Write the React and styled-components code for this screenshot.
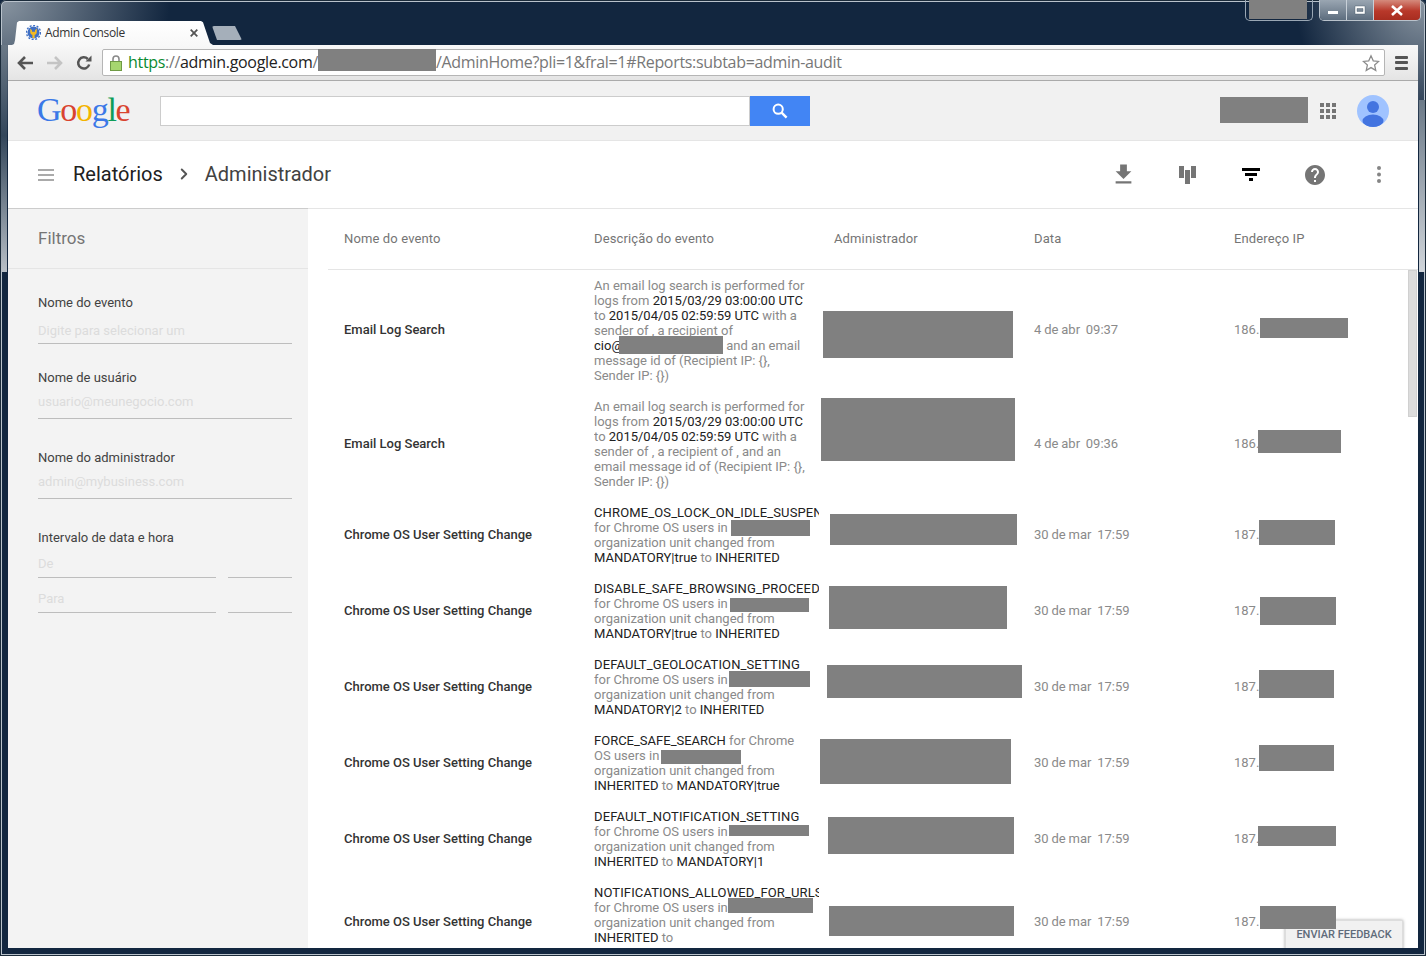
import React from 'react';
import styled, { createGlobalStyle } from 'styled-components';
import { FiChevronRight } from 'react-icons/fi';

const Global = createGlobalStyle`
  html, body { margin: 0; padding: 0; background: #12263f; overflow: hidden; }
  * { box-sizing: border-box; }
`;

const Window = styled.div`
  position: relative;
  width: 1426px;
  height: 956px;
  padding: 0 8px 8px;
  overflow: hidden;
  display: flex;
  flex-direction: column;
  border-radius: 6px 6px 0 0;
  background:
    radial-gradient(ellipse 170px 140px at 0 0, #8a96a2 0%, rgba(138, 150, 162, 0) 100%),
    radial-gradient(ellipse 130px 140px at 100% 0, #8a96a2 0%, rgba(138, 150, 162, 0) 100%),
    #12263f;
  box-shadow: inset 0 0 0 1px #1b2b3a, inset 0 0 0 2px #b9c2cb;
  &::before, &::after {
    content: '';
    position: absolute;
    width: 6px;
  }
  &::before {
    left: 1px;
    top: 45px;
    height: 227px;
    background: linear-gradient(#6a7886, #33465a 40%, #b8bfc6);
  }
  &::after {
    right: 1px;
    top: 100px;
    height: 172px;
    background: linear-gradient(#6c7a88, #d0d5da);
  }
`;

const TitleBar = styled.div`
  height: 45px;
  display: flex;
  align-items: flex-end;
  padding-left: 4px;
  flex: none;
`;

const Tab = styled.div`
  width: 201px;
  height: 24px;
  display: flex;
  align-items: center;
  gap: 4px;
  padding: 0 15px 1px 14px;
  background: linear-gradient(#fff, #f8f8f8);
  clip-path: polygon(0 100%, 2px 96%, 3px 80%, 5px 6%, 7px 0, 189px 0, 191px 5%, 198px 92%, 201px 100%);
  svg { flex: none; }
`;

const TabTitle = styled.span`
  flex: 1;
  font: 12px 'Open Sans', sans-serif;
  color: #333;
  letter-spacing: -0.35px;
`;

const NewTab = styled.div`
  width: 30px;
  height: 14px;
  margin: 0 0 5px -1px;
  background: #a5afba;
  border-radius: 2px;
  clip-path: polygon(0 0, 23px 0, 30px 100%, 5px 100%);
`;

const Controls = styled.div`
  margin-left: auto;
  margin-right: -3px;
  align-self: flex-start;
  display: flex;
  gap: 6px;
`;

const GhostGroup = styled.div`
  width: 68px;
  height: 21px;
  border: 1px solid #9aa7b4;
  border-top: 0;
  border-radius: 0 0 5px 5px;
`;

const ControlGroup = styled.div`
  height: 21px;
  display: flex;
  border: 1px solid #b9c2cb;
  border-top: 0;
  border-radius: 0 0 5px 5px;
  overflow: hidden;
`;

const ControlButton = styled.div`
  width: 27px;
  display: flex;
  align-items: center;
  justify-content: center;
  background: linear-gradient(#9aa6b2, #5d6d7e);
  border-right: 1px solid #c8d0d8;
`;

const CloseButton = styled(ControlButton)`
  width: 46px;
  border-right: 0;
  background: linear-gradient(#d58a7c, #b8382a 55%, #a82d20);
`;

const Content = styled.div`
  position: relative;
  flex: 1;
  min-height: 0;
  display: flex;
  flex-direction: column;
  overflow: hidden;
  background: #fff;
`;

const Toolbar = styled.div`
  height: 36px;
  flex: none;
  display: flex;
  align-items: center;
  padding: 0 10px 0 3px;
  border-bottom: 1px solid #aaa;
  background: linear-gradient(#f8f8f8, #e4e4e4);
`;

const NavIcon = styled.div`
  width: 29px;
  display: flex;
  justify-content: center;
  svg { display: block; }
`;

const Omnibox = styled.div`
  width: 1283px;
  height: 27px;
  margin-left: 4px;
  padding: 0 4px 0 7px;
  display: flex;
  align-items: center;
  background: #fff;
  border: 1px solid #b5b5b5;
  border-radius: 2px;
  svg { flex: none; }
`;

const Url = styled.div`
  flex: 1;
  margin-left: 6px;
  font: 16px 'Open Sans', sans-serif;
  color: #222;
  white-space: nowrap;
  letter-spacing: -0.32px;
  line-height: 25px;
`;

const UrlScheme = styled.span`
  color: #0a8a30;
`;

const UrlMuted = styled.span`
  color: #777;
`;

const Gap = styled.span`
  display: inline-block;
  width: ${(p) => p.$w}px;
`;

const MenuButton = styled.div`
  margin-left: 10px;
  width: 13px;
  display: flex;
  flex-direction: column;
  gap: 2.5px;
  span { height: 3px; background: #555; border-radius: 1px; }
`;

const GoogleBar = styled.div`
  height: 60px;
  flex: none;
  display: flex;
  align-items: center;
  padding: 0 29px 0 30px;
  background: #f1f1f1;
  border-bottom: 1px solid #e5e5e5;
`;

const Logo = styled.div`
  width: 122px;
  font: 34px 'Liberation Serif', serif;
  letter-spacing: -1.3px;
  margin-top: -2px;
  text-indent: -1px;
`;

const LogoLetter = styled.span`
  color: ${(p) => p.$color};
`;

const SearchInput = styled.div`
  width: 590px;
  height: 30px;
  background: #fff;
  border: 1px solid #ccc;
`;

const SearchButton = styled.div`
  width: 60px;
  height: 30px;
  display: flex;
  align-items: center;
  justify-content: center;
  background: #4285f4;
`;

const UserArea = styled.div`
  margin-left: auto;
  display: flex;
  align-items: center;
  gap: 21px;
`;

const AppsGrid = styled.div`
  display: grid;
  grid-template-columns: repeat(3, 4px);
  gap: 2px;
  i { height: 4px; background: #757575; }
`;

const ReportBar = styled.div`
  height: 68px;
  flex: none;
  display: flex;
  align-items: center;
  padding: 0 7px 0 30px;
  border-bottom: 1px solid #e5e5e5;
  background: #fff;
`;

const Hamburger = styled.div`
  width: 16px;
  margin-right: 19px;
  display: flex;
  flex-direction: column;
  gap: 3px;
  span { height: 2px; background: #aaa; }
`;

const Crumb = styled.div`
  font: 20px Roboto, sans-serif;
  color: #212121;
  padding-bottom: 2px;
`;

const CrumbCurrent = styled(Crumb)`
  color: #424242;
`;

const CrumbArrow = styled.div`
  width: 42px;
  display: flex;
  justify-content: center;
  color: #555;
  padding-bottom: 1px;
`;

const ReportActions = styled.div`
  margin-left: auto;
  display: flex;
`;

const ActionIcon = styled.div`
  width: 64px;
  height: 28px;
  display: flex;
  align-items: center;
  justify-content: center;
`;

const Main = styled.div`
  flex: 1;
  min-height: 0;
  display: flex;
`;

const Sidebar = styled.aside`
  width: 300px;
  flex: none;
  background: #f3f3f3;
  border-top: 1px solid #ccc;
  margin-top: -1px;
`;

const SidebarTitle = styled.div`
  height: 60px;
  padding-left: 30px;
  font: 17px/59px Roboto, sans-serif;
  color: #757575;
  border-bottom: 1px solid #e5e5e5;
`;

const Field = styled.div`
  margin-top: ${(p) => p.$top}px;
  padding: 0 16px 0 30px;
`;

const FieldLabel = styled.div`
  font: 13px/15px Roboto, sans-serif;
  color: #424242;
`;

const FieldInput = styled.div`
  height: 26px;
  padding-top: 4px;
  font: 13px/15px Roboto, sans-serif;
  color: #dcdcdc;
  border-bottom: 1px solid #bdbdbd;
  ${FieldLabel} + & {
    height: 34px;
    padding-top: ${(p) => p.$pad || 9}px;
  }
`;

const DateRow = styled.div`
  display: grid;
  grid-template-columns: 178px 64px;
  column-gap: 12px;
  margin-top: 9px;
  &:nth-child(2) { margin-top: 0; }
  &:nth-child(2) ${FieldInput} { height: 33px; padding-top: 11px; }
`;

const TableArea = styled.div`
  flex: 1;
  min-width: 0;
  padding-left: 20px;
`;

const columns = '250px 240px 200px 200px 1fr';

const TableHead = styled.div`
  height: 61px;
  display: grid;
  grid-template-columns: ${columns};
  align-items: center;
  padding-left: 16px;
  padding-bottom: 2px;
  border-bottom: 1px solid #e5e5e5;
`;

const HeadCell = styled.div`
  font: 13px Roboto, sans-serif;
  color: #757575;
  letter-spacing: 0.13px;
`;

const TableBody = styled.div`
  position: relative;
`;

const ScrollThumb = styled.div`
  position: absolute;
  top: 0;
  right: 1px;
  width: 9px;
  height: 147px;
  background: #dcdcdc;
  border: 1px solid #d0d0d0;
`;

const Row = styled.div`
  display: grid;
  grid-template-columns: ${columns};
  align-items: center;
  padding: 8px 0 8px 16px;
`;

const EventName = styled.div`
  font: 500 13px Roboto, sans-serif;
  color: #333;
  padding-bottom: 2px;
`;

const Description = styled.div`
  width: 225px;
  overflow: hidden;
  white-space: nowrap;
  font: 13px/15px Roboto, sans-serif;
  color: #8a8a8a;
`;

const Em = styled.span`
  color: #212121;
  letter-spacing: ${(p) => (p.$setting ? '0.13px' : '0')};
`;

const DateCell = styled.div`
  font: 13px Roboto, sans-serif;
  color: #8a8a8a;
  white-space: pre;
  word-spacing: -0.35px;
  padding-bottom: 2px;
`;

const FeedbackButton = styled.div`
  position: absolute;
  right: 15px;
  bottom: -2px;
  width: 118px;
  height: 30px;
  text-align: center;
  font: 500 11px/28px Roboto, sans-serif;
  color: #5f6b7a;
  background: #f1f1f1;
  border: 1px solid #ddd;
  box-shadow: 0 0 3px rgba(0, 0, 0, 0.35);
`;

const Redaction = styled.div`
  position: absolute;
  left: ${(p) => p.$x}px;
  top: ${(p) => p.$y}px;
  width: ${(p) => p.$w}px;
  height: ${(p) => p.$h}px;
  background: #808080;
`;

const settingRow = (setting, from, to) => ({
  name: 'Chrome OS User Setting Change',
  date: '30 de mar  17:59',
  ip: '187.',
  lines: [
    [<Em key="a" $setting>{setting}</Em>],
    ['for Chrome OS users in'],
    ['organization unit changed from'],
    [<Em key="a">{from}</Em>, ' to ', <Em key="b">{to}</Em>],
  ],
});

const events = [
  {
    name: 'Email Log Search', date: '4 de abr  09:37', ip: '186.',
    lines: [
      ['An email log search is performed for'],
      ['logs from ', <Em key="a">2015/03/29 03:00:00 UTC</Em>],
      ['to ', <Em key="a">2015/04/05 02:59:59 UTC</Em>, ' with a'],
      ['sender of , a recipient of'],
      [<Em key="a">cio@</Em>, <Gap key="g" $w={100} />, ' and an email'],
      ['message id of (Recipient IP: {},'],
      ['Sender IP: {})'],
    ],
  },
  {
    name: 'Email Log Search', date: '4 de abr  09:36', ip: '186.',
    lines: [
      ['An email log search is performed for'],
      ['logs from ', <Em key="a">2015/03/29 03:00:00 UTC</Em>],
      ['to ', <Em key="a">2015/04/05 02:59:59 UTC</Em>, ' with a'],
      ['sender of , a recipient of , and an'],
      ['email message id of (Recipient IP: {},'],
      ['Sender IP: {})'],
    ],
  },
  settingRow('CHROME_OS_LOCK_ON_IDLE_SUSPEND', 'MANDATORY|true', 'INHERITED'),
  settingRow('DISABLE_SAFE_BROWSING_PROCEED_ANYWAY', 'MANDATORY|true', 'INHERITED'),
  settingRow('DEFAULT_GEOLOCATION_SETTING', 'MANDATORY|2', 'INHERITED'),
  {
    name: 'Chrome OS User Setting Change', date: '30 de mar  17:59', ip: '187.',
    lines: [
      [<Em key="a">FORCE_SAFE_SEARCH</Em>, ' for Chrome'],
      ['OS users in'],
      ['organization unit changed from'],
      [<Em key="a">INHERITED</Em>, ' to ', <Em key="b">MANDATORY|true</Em>],
    ],
  },
  settingRow('DEFAULT_NOTIFICATION_SETTING', 'INHERITED', 'MANDATORY|1'),
  {
    name: 'Chrome OS User Setting Change', date: '30 de mar  17:59', ip: '187.',
    lines: [
      [<Em key="a" $setting>NOTIFICATIONS_ALLOWED_FOR_URLS</Em>],
      ['for Chrome OS users in'],
      ['organization unit changed from'],
      [<Em key="a">INHERITED</Em>, ' to'],
      [<Em key="a">MANDATORY|1</Em>],
    ],
  },
];

// grey boxes painted over private data in the screenshot, page coordinates
const redactions = [
  [1249, 0, 58, 19], [318, 49, 118, 22], [1220, 97, 88, 26],
  [619, 336, 104, 18], [823, 311, 190, 47], [1260, 318, 88, 20],
  [821, 398, 194, 63], [1258, 430, 83, 23],
  [731, 520, 79, 16], [830, 514, 187, 31], [1259, 520, 76, 25],
  [730, 598, 79, 14], [829, 586, 178, 43], [1260, 597, 76, 28],
  [729, 671, 81, 16], [827, 665, 195, 33], [1259, 670, 75, 28],
  [661, 750, 80, 14], [820, 739, 191, 45], [1259, 745, 75, 26],
  [729, 825, 80, 11], [828, 817, 186, 37], [1258, 826, 78, 20],
  [728, 898, 85, 15], [829, 906, 185, 30], [1260, 906, 76, 23],
];

const logoLetters = [
  ['G', '#3b78e7'], ['o', '#d9432f'], ['o', '#f4b400'],
  ['g', '#3b78e7'], ['l', '#0f9d58'], ['e', '#d9432f'],
];

const App = () => (
  <Window>
    <Global />
    <TitleBar>
      <Tab>
        <svg width="15" height="15" viewBox="0 0 15 15">
          <circle cx="7.5" cy="7.5" r="6" fill="#3f6fc4" />
          <circle cx="7.5" cy="7.5" r="7" fill="none" stroke="#3f6fc4" strokeWidth="1.4" strokeDasharray="2 1.6" />
          <path d="M4.2 3.5v3.2a3.3 3.3 0 0 0 6.6 0V3.5L9 5.2v1.5H6V5.2z" fill="#f5b921" />
          <rect x="6.4" y="9" width="2.2" height="4" fill="#f5b921" />
        </svg>
        <TabTitle>Admin Console</TabTitle>
        <svg width="8" height="8" viewBox="0 0 8 8">
          <path d="M.7.7l6.6 6.6M7.3.7L.7 7.3" stroke="#555" strokeWidth="1.8" />
        </svg>
      </Tab>
      <NewTab />
      <Controls>
        <GhostGroup />
        <ControlGroup>
          <ControlButton>
            <svg width="12" height="10" viewBox="0 0 12 10"><rect x="1" y="6" width="10" height="3" fill="#fff" /></svg>
          </ControlButton>
          <ControlButton>
            <svg width="12" height="10" viewBox="0 0 12 10"><path d="M1 1h10v8H1zM3 3.5v3h6v-3z" fill="#fff" fillRule="evenodd" stroke="#40505f" strokeWidth=".4" /></svg>
          </ControlButton>
          <CloseButton>
            <svg width="14" height="11" viewBox="0 0 14 11"><path d="M2 1l10 9M12 1L2 10" stroke="#fff" strokeWidth="2.6" /></svg>
          </CloseButton>
        </ControlGroup>
      </Controls>
    </TitleBar>

    <Content>
      <Toolbar>
        <NavIcon>
          <svg width="17" height="16" viewBox="0 0 17 16"><path d="M8 2L2 8l6 6M2 8h14" fill="none" stroke="#555" strokeWidth="2.6" /></svg>
        </NavIcon>
        <NavIcon>
          <svg width="17" height="16" viewBox="0 0 17 16"><path d="M9 2l6 6-6 6M15 8H1" fill="none" stroke="#c4c4c4" strokeWidth="2.6" /></svg>
        </NavIcon>
        <NavIcon>
          <svg width="16" height="16" viewBox="0 0 16 16"><path d="M13.2 9.5A5.6 5.6 0 1 1 11.8 4" fill="none" stroke="#555" strokeWidth="2.5" /><path d="M9.5 6.5h6v-6z" fill="#555" /></svg>
        </NavIcon>
        <Omnibox>
          <svg width="12" height="17" viewBox="0 0 12 17">
            <path d="M3 8V5a3 3 0 0 1 6 0v3" fill="none" stroke="#8a8a8a" strokeWidth="1.6" />
            <rect x=".5" y="7.5" width="11" height="9" fill="#a6d66f" stroke="#6f9a45" />
          </svg>
          <Url>
            <UrlScheme>https</UrlScheme>
            <UrlMuted>://</UrlMuted>admin.google.com<UrlMuted>/</UrlMuted>
            <Gap $w={118} />
            <UrlMuted>/AdminHome?pli=1&amp;fral=1#Reports:subtab=admin-audit</UrlMuted>
          </Url>
          <svg width="18" height="18" viewBox="0 0 20 19">
            <path d="M10 1.5l2.5 5.6 6 .6-4.5 4 1.3 6L10 14.6l-5.3 3.1 1.3-6-4.5-4 6-.6z" fill="#fff" stroke="#8c8c8c" strokeWidth="1.4" />
          </svg>
        </Omnibox>
        <MenuButton>
          <span /><span /><span />
        </MenuButton>
      </Toolbar>

      <GoogleBar>
        <Logo>
          {logoLetters.map(([letter, color], i) => (
            <LogoLetter key={i} $color={color}>{letter}</LogoLetter>
          ))}
        </Logo>
        <SearchInput />
        <SearchButton>
          <svg width="18" height="18" viewBox="0 0 18 18">
            <circle cx="7.2" cy="7.2" r="4.6" fill="none" stroke="#fff" strokeWidth="2" />
            <path d="M10.6 10.6l5 5" stroke="#fff" strokeWidth="2.4" />
          </svg>
        </SearchButton>
        <UserArea>
          <AppsGrid>
            {Array.from({ length: 9 }).map((_, i) => <i key={i} />)}
          </AppsGrid>
          <svg width="32" height="32" viewBox="0 0 32 32">
            <defs><clipPath id="avatar"><circle cx="16" cy="16" r="16" /></clipPath></defs>
            <circle cx="16" cy="16" r="16" fill="#a0c3ff" />
            <g clipPath="url(#avatar)">
              <circle cx="16" cy="12" r="6" fill="#4374e0" />
              <ellipse cx="16" cy="26" rx="10.5" ry="6.5" fill="#4374e0" />
            </g>
          </svg>
        </UserArea>
      </GoogleBar>

      <ReportBar>
        <Hamburger><span /><span /><span /></Hamburger>
        <Crumb>Relatórios</Crumb>
        <CrumbArrow><FiChevronRight size={18} strokeWidth={2.6} /></CrumbArrow>
        <CrumbCurrent>Administrador</CrumbCurrent>
        <ReportActions>
          <ActionIcon>
            <svg width="27" height="27" viewBox="0 0 24 24"><path d="M19 9h-4V3H9v6H5l7 7 7-7zM5 18v2h14v-2H5z" fill="#757575" /></svg>
          </ActionIcon>
          <ActionIcon>
            <svg width="17" height="18" viewBox="0 0 17 18" fill="#757575">
              <rect width="5" height="12" /><rect x="6" y="4" width="5" height="14" /><rect x="12" width="5" height="12" />
            </svg>
          </ActionIcon>
          <ActionIcon>
            <svg width="18" height="13" viewBox="0 0 18 13">
              <rect width="18" height="3" /><rect x="3" y="5" width="12" height="3" /><rect x="7" y="10" width="4" height="3" />
            </svg>
          </ActionIcon>
          <ActionIcon>
            <svg width="24" height="24" viewBox="0 0 24 24"><path d="M12 2C6.48 2 2 6.48 2 12s4.48 10 10 10 10-4.48 10-10S17.52 2 12 2zm1 17h-2v-2h2v2zm2.07-7.75l-.9.92C13.45 12.9 13 13.5 13 15h-2v-.5c0-1.1.45-2.1 1.17-2.83l1.24-1.26c.37-.36.59-.86.59-1.41 0-1.1-.9-2-2-2s-2 .9-2 2H8c0-2.21 1.79-4 4-4s4 1.79 4 4c0 .88-.36 1.68-.93 2.25z" fill="#757575" /></svg>
          </ActionIcon>
          <ActionIcon>
            <svg width="4" height="17" viewBox="0 0 4 17" fill="#858585">
              <circle cx="2" cy="2" r="2" /><circle cx="2" cy="8.5" r="2" /><circle cx="2" cy="15" r="2" />
            </svg>
          </ActionIcon>
        </ReportActions>
      </ReportBar>

      <Main>
        <Sidebar>
          <SidebarTitle>Filtros</SidebarTitle>
          <Field $top={26}>
            <FieldLabel>Nome do evento</FieldLabel>
            <FieldInput $pad={13}>Digite para selecionar um</FieldInput>
          </Field>
          <Field $top={26}>
            <FieldLabel>Nome de usuário</FieldLabel>
            <FieldInput>usuario@meunegocio.com</FieldInput>
          </Field>
          <Field $top={31}>
            <FieldLabel>Nome do administrador</FieldLabel>
            <FieldInput>admin@mybusiness.com</FieldInput>
          </Field>
          <Field $top={31}>
            <FieldLabel>Intervalo de data e hora</FieldLabel>
            <DateRow><FieldInput>De</FieldInput><FieldInput /></DateRow>
            <DateRow><FieldInput>Para</FieldInput><FieldInput /></DateRow>
          </Field>
        </Sidebar>

        <TableArea>
          <TableHead>
            <HeadCell>Nome do evento</HeadCell>
            <HeadCell>Descrição do evento</HeadCell>
            <HeadCell>Administrador</HeadCell>
            <HeadCell>Data</HeadCell>
            <HeadCell>Endereço IP</HeadCell>
          </TableHead>
          <TableBody>
            <ScrollThumb />
            {events.map((ev, i) => (
              <Row key={i}>
                <EventName>{ev.name}</EventName>
                <Description>
                  {ev.lines.map((line, j) => <div key={j}>{line}</div>)}
                </Description>
                <span />
                <DateCell>{ev.date}</DateCell>
                <DateCell>{ev.ip}</DateCell>
              </Row>
            ))}
          </TableBody>
        </TableArea>
      </Main>
      <FeedbackButton>ENVIAR FEEDBACK</FeedbackButton>
    </Content>

    {redactions.map(([x, y, w, h]) => (
      <Redaction key={`${x}-${y}`} $x={x} $y={y} $w={w} $h={h} />
    ))}
  </Window>
);

export default App;
